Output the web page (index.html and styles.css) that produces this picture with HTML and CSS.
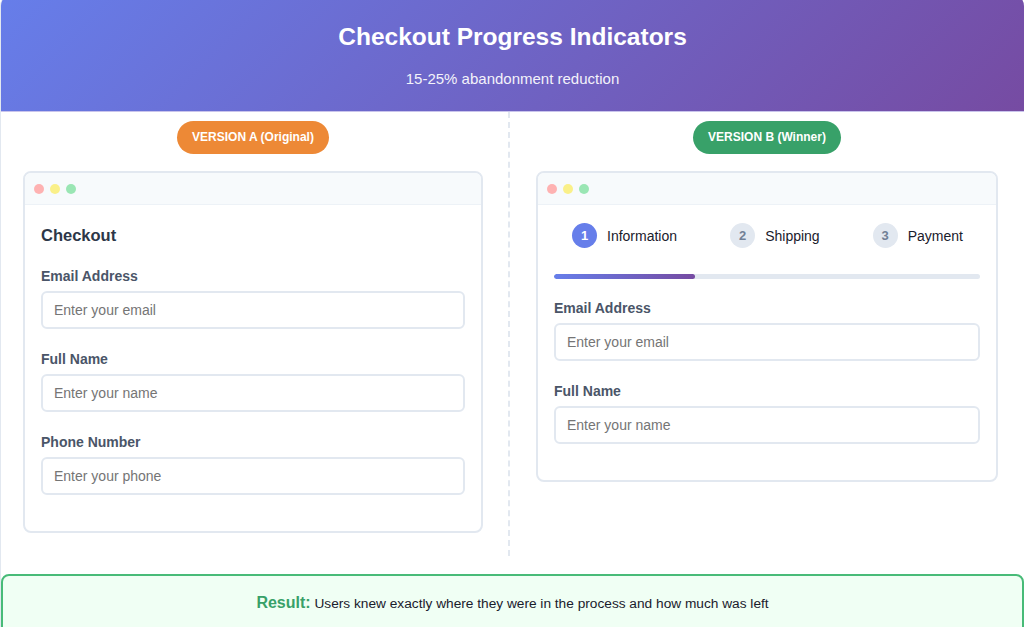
FILE: index.html
```html
<!DOCTYPE html>
<html lang="en">
<head>
    <meta charset="UTF-8">
    <meta name="viewport" content="width=device-width, initial-scale=1.0">
    <title>Checkout Progress Indicators</title>
    <link rel="stylesheet" href="styles.css">
</head>
<body>
    <div class="page">
        <header class="hero">
            <h1>Checkout Progress Indicators</h1>
            <p>15-25% abandonment reduction</p>
        </header>

        <div class="compare">
            <section class="column column-a">
                <span class="badge badge-a">VERSION A (Original)</span>
                <div class="browser">
                    <div class="browser-bar">
                        <span class="dot red"></span>
                        <span class="dot yellow"></span>
                        <span class="dot green"></span>
                    </div>
                    <div class="browser-body">
                        <h2>Checkout</h2>
                        <div class="field">
                            <label>Email Address</label>
                            <input type="text" placeholder="Enter your email">
                        </div>
                        <div class="field">
                            <label>Full Name</label>
                            <input type="text" placeholder="Enter your name">
                        </div>
                        <div class="field">
                            <label>Phone Number</label>
                            <input type="text" placeholder="Enter your phone">
                        </div>
                    </div>
                </div>
            </section>

            <section class="column column-b">
                <span class="badge badge-b">VERSION B (Winner)</span>
                <div class="browser">
                    <div class="browser-bar">
                        <span class="dot red"></span>
                        <span class="dot yellow"></span>
                        <span class="dot green"></span>
                    </div>
                    <div class="browser-body">
                        <div class="steps">
                            <div class="step active"><span class="num">1</span>Information</div>
                            <div class="step"><span class="num">2</span>Shipping</div>
                            <div class="step"><span class="num">3</span>Payment</div>
                        </div>
                        <div class="progress">
                            <div class="progress-fill" style="width: 33%;"></div>
                        </div>
                        <div class="field">
                            <label>Email Address</label>
                            <input type="text" placeholder="Enter your email">
                        </div>
                        <div class="field">
                            <label>Full Name</label>
                            <input type="text" placeholder="Enter your name">
                        </div>
                    </div>
                </div>
            </section>
        </div>

        <div class="result">
            <strong>Result:</strong> Users knew exactly where they were in the process and how much was left
        </div>
    </div>
</body>
</html>
```

FILE: styles.css
```css
body {
    font-family: "Liberation Sans", Arial, Helvetica, sans-serif;
    background-color: #ffffff;
    color: #1a202c;
    margin: 0;
    padding: 0;
}
.page {
    margin-top: -6px;
    border-left: 1px solid #e2e8f0;
    border-radius: 12px 12px 0 0;
    overflow: hidden;
}
.hero {
    background: linear-gradient(135deg, #667eea 0%, #764ba2 100%);
    color: #ffffff;
    text-align: center;
    height: 118px;
    box-sizing: border-box;
    padding-top: 28px;
    border-bottom: 1px solid #c9c4ec;
}
.hero h1 {
    margin: 0;
    font-size: 24.5px;
    line-height: 30px;
    font-weight: 700;
}
.hero p {
    margin: 18px 0 0;
    font-size: 15px;
    line-height: 18px;
    opacity: 0.92;
}
.compare {
    display: grid;
    grid-template-columns: 509px 1fr;
    height: 444px;
}
.column {
    display: flex;
    flex-direction: column;
    align-items: center;
    padding: 9px 26px 0 26px;
}
.column-a {
    border-right: 2px dashed #e2e8f0;
    padding: 9px 25px 0 22px;
}
.badge {
    display: inline-block;
    color: #ffffff;
    font-size: 12px;
    font-weight: 700;
    line-height: 15px;
    padding: 9px 15px;
    border-radius: 20px;
    margin-bottom: 17px;
}
.badge-a {
    background-color: #ed8936;
}
.badge-b {
    background-color: #38a169;
}
.browser {
    width: 100%;
    box-sizing: border-box;
    border: 2px solid #e2e8f0;
    border-radius: 8px;
    background-color: #ffffff;
    overflow: hidden;
}
.browser-bar {
    height: 31px;
    background-color: #f7fafc;
    border-bottom: 1px solid #edf2f7;
    display: flex;
    align-items: center;
    gap: 6px;
    padding: 0 9px;
}
.dot {
    width: 10px;
    height: 10px;
    border-radius: 50%;
}
.dot.red {
    background-color: #feb2b2;
}
.dot.yellow {
    background-color: #faf089;
}
.dot.green {
    background-color: #9ae6b4;
}
.browser-body {
    padding: 18px 16px 14px;
}
.browser-body h2 {
    margin: 0 0 21px;
    font-size: 16.5px;
    line-height: 24px;
    color: #2d3748;
    font-weight: 700;
}
.field {
    margin-bottom: 22px;
}
.field label {
    display: block;
    font-size: 14px;
    line-height: 17px;
    font-weight: 700;
    color: #4a5568;
    margin-bottom: 6px;
}
.field input {
    display: block;
    width: 100%;
    box-sizing: border-box;
    height: 38px;
    padding: 0 11px;
    border: 2px solid #e2e8f0;
    border-radius: 6px;
    font-family: inherit;
    font-size: 14px;
    color: #2d3748;
    background-color: #ffffff;
}
.field input::placeholder {
    color: #757575;
}
.steps {
    display: flex;
    justify-content: space-between;
    align-items: center;
    padding: 0 17px 0 18px;
}
.step {
    display: flex;
    align-items: center;
    gap: 10px;
    font-size: 14px;
    color: #1a202c;
}
.num {
    width: 25px;
    height: 25px;
    border-radius: 50%;
    background-color: #e2e8f0;
    color: #718096;
    font-size: 13px;
    font-weight: 700;
    display: flex;
    align-items: center;
    justify-content: center;
}
.step.active .num {
    background-color: #667eea;
    color: #ffffff;
}
.progress {
    height: 5px;
    margin: 26px 0 21px;
    background-color: #e2e8f0;
    border-radius: 3px;
    overflow: hidden;
}
.progress-fill {
    height: 100%;
    background: linear-gradient(90deg, #667eea, #764ba2);
    border-radius: 3px;
}
.result {
    margin-top: 18px;
    background-color: #f0fff4;
    border: 2px solid #48bb78;
    border-radius: 8px;
    text-align: center;
    padding: 18px 20px 30px;
    font-size: 13.7px;
    color: #1a202c;
}
.result strong {
    color: #38a169;
    font-size: 16px;
}
```
